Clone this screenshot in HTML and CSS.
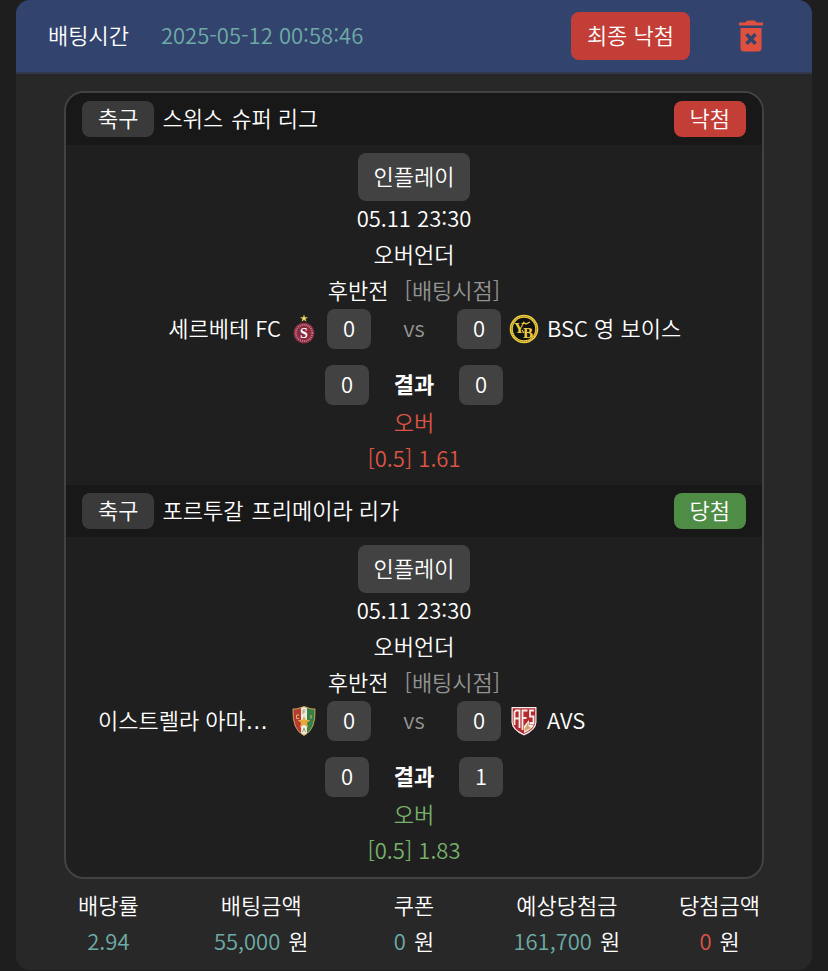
FILE: index.html
```html
<!DOCTYPE html>
<html lang="ko">

<head>
    <meta charset="UTF-8" />
    <meta name="viewport" content="width=device-width, initial-scale=1.0" />
    <title>배팅내역</title>
    <link rel="stylesheet" href="styles.css">
</head>

<body>
    <main class="bet">
        <header class="bet-header">
            <span class="text">배팅시간</span>
            <time class="text teal">2025-05-12 00:58:46</time>
            <button type="button" class="btn btn-lose final">최종 낙첨</button>
            <button type="button" class="btn-delete" aria-label="삭제">
                <svg width="26" height="32" viewBox="0 0 26 32">
                    <path fill="#e0503f" d="M1 2.5H7.5Q8.5 .5 10 .5H16Q17.500 .5 18.500 2.500H25V5.500H1Z" />
                    <path fill="#e0503f" fill-rule="evenodd" d="M2.500 8H23.500V28Q23.500 31.500 20 31.500H6Q2.500 31.500 2.500 28ZM7.200 15.500 10.700 19 7.200 22.500 9.800 25.100 13 21.700 16.200 25.100 18.800 22.500 15.300 19 18.800 15.500 16.200 12.900 13 16.300 9.800 12.900Z" />
                </svg>
            </button>
        </header>

        <div class="games">
            <section class="game">
                <div class="game-head">
                    <span class="badge text">축구</span>
                    <span class="text">스위스</span>
                    <span class="text">슈퍼 리그</span>
                    <span class="badge badge-lose text">낙첨</span>
                </div>
                <div class="game-body">
                    <button type="button" class="btn">인플레이</button>
                    <div class="text">05.11 23:30</div>
                    <div class="text">오버언더</div>
                    <div class="period text"><span>후반전</span><span class="gray">[배팅시점]</span></div>
                    <div class="match">
                        <div class="team home">
                            <span class="team-name text">세르베테 FC</span>
                            <svg class="logo" viewBox="0 0 30 30">
                                <path fill="#e5d35f" d="M15 .5 16 3.200H19L16.600 5 17.500 7.800 15 6.100 12.500 7.800 13.400 5 11 3.200H14Z" />
                                <circle cx="15" cy="19" r="10.500" fill="#8c2b40" />
                                <circle cx="15" cy="19" r="8.200" fill="none" stroke="#c38b98" stroke-width="1.800" stroke-dasharray="1 1" />
                                <circle cx="15" cy="19" r="6.200" fill="#8c2b40" />
                                <text x="15" y="23.500" class="logo-serif">S</text>
                            </svg>
                        </div>
                        <span class="score">0</span>
                        <span class="vs text gray">vs</span>
                        <span class="score">0</span>
                        <div class="team">
                            <svg class="logo" viewBox="0 0 30 30">
                                <circle cx="15" cy="15" r="14.300" fill="#f0cf3e" />
                                <circle cx="15" cy="15" r="12.600" fill="none" stroke="#7d6b20" stroke-width="1" stroke-dasharray="1.200 1" />
                                <circle cx="15" cy="15" r="11.200" fill="#111" />
                                <text x="10.500" y="18.500" class="logo-yb">Y</text>
                                <text x="19" y="24" class="logo-yb">B</text>
                                <path fill="none" stroke="#f0cf3e" stroke-width="1.200" d="M14 8 17 10 21 8M13 16 15 19" />
                            </svg>
                            <span class="team-name text">BSC 영 보이스</span>
                        </div>
                    </div>
                    <div class="result">
                        <span class="score">0</span>
                        <strong class="text">결과</strong>
                        <span class="score">0</span>
                    </div>
                    <div class="text red">오버</div>
                    <div class="text red">[0.5] 1.61</div>
                </div>
            </section>

            <section class="game">
                <div class="game-head">
                    <span class="badge text">축구</span>
                    <span class="text">포르투갈</span>
                    <span class="text">프리메이라 리가</span>
                    <span class="badge badge-win text">당첨</span>
                </div>
                <div class="game-body">
                    <button type="button" class="btn">인플레이</button>
                    <div class="text">05.11 23:30</div>
                    <div class="text">오버언더</div>
                    <div class="period text"><span>후반전</span><span class="gray">[배팅시점]</span></div>
                    <div class="match">
                        <div class="team home">
                            <span class="team-name long text">이스트렐라 아마<span class="dots">…</span></span>
                            <svg class="logo" viewBox="0 0 30 30">
                                <path fill="#b83a35" d="M4 3Q8 3.500 12 1.500L15 .5V29.500Q3 24 4 3Z" />
                                <path fill="#348047" d="M26 3Q22 3.500 18 1.500L15 .5V29.500Q27 24 26 3Z" />
                                <path fill="#ece9df" d="M12 1.500 15 .5 18 1.500V28L15 29.500 12 28Z" />
                                <path fill="none" stroke="#c8a452" d="M4 3Q8 3.500 12 1.500L15 .7 18 1.500Q22 3.500 26 3 27 24 15 29.300 3 24 4 3Z" />
                                <path fill="#e4a83c" d="M15 10 16.700 14H21.500L17.800 17 19.300 21.500 15 18.800 10.700 21.500 12.200 17 8.500 14H13.300Z" />
                                <path fill="none" stroke="#d9b45e" d="M10 9H7.500V12.500H10M22 9V12.500" />
                                <path fill="none" stroke="#a99b6b" d="M14 8V4H16.500M14 6H16M13.500 26 15 22 16.500 26" />
                            </svg>
                        </div>
                        <span class="score">0</span>
                        <span class="vs text gray">vs</span>
                        <span class="score">0</span>
                        <div class="team">
                            <svg class="logo" viewBox="0 0 30 30">
                                <path fill="#f5eeea" d="M2.500 1H27.500V16Q27.500 24 15 29.500 2.500 24 2.500 16Z" />
                                <path fill="#b52a30" d="M3.700 2.200H26.300V16Q26.300 23 15 28 3.700 23 3.700 16Z" />
                                <path fill="none" stroke="#f5eeea" stroke-width="1.800" d="M5.500 19V6L7 4.500H10.500V22M5.500 12.500H10.500M13.500 24V4.500H18.500M13.500 12H17.500M25 4.500H21V10.500H24.500V17H20.500" />
                                <path fill="#f5eeea" d="M15 27V20L20 14V18.500H25Q23.500 23 15 27Z" />
                                <path fill="#d9a066" d="M15.500 23 19.500 16V20L22 22 15.500 25Z" />
                            </svg>
                            <span class="team-name text">AVS</span>
                        </div>
                    </div>
                    <div class="result">
                        <span class="score">0</span>
                        <strong class="text">결과</strong>
                        <span class="score">1</span>
                    </div>
                    <div class="text green">오버</div>
                    <div class="text green">[0.5] 1.83</div>
                </div>
            </section>
        </div>

        <dl class="summary">
            <div>
                <dt class="text">배당률</dt>
                <dd class="text"><span class="teal">2.94</span></dd>
            </div>
            <div>
                <dt class="text">배팅금액</dt>
                <dd class="text"><span class="teal">55,000</span><span>원</span></dd>
            </div>
            <div>
                <dt class="text">쿠폰</dt>
                <dd class="text"><span class="teal">0</span><span>원</span></dd>
            </div>
            <div>
                <dt class="text">예상당첨금</dt>
                <dd class="text"><span class="teal">161,700</span><span>원</span></dd>
            </div>
            <div>
                <dt class="text">당첨금액</dt>
                <dd class="text"><span class="red">0</span><span>원</span></dd>
            </div>
        </dl>
    </main>
</body>

</html>
```
FILE: styles.css
```css
* {
    box-sizing: border-box;
}

body {
    margin: 0;
    padding: 0 16px;
    background: #1e1e1e;
    color: #fff;
    font-family: "Noto Sans CJK KR", sans-serif;
    font-size: 22px;
    font-weight: 350;
    line-height: 32px;
}

button {
    border: none;
    color: inherit;
    font: inherit;
    cursor: pointer;
}

/* the font sits low in its line */
.text {
    padding-bottom: 4px;
}

.bet {
    background: #282828;
    border-radius: 14px;
    overflow: hidden;
}

.bet-header {
    display: flex;
    align-items: center;
    gap: 32px;
    padding: 12px 32px;
    background: #32436d;
    border-bottom: 2px solid #323749;
}

.final {
    margin-left: auto;
}

.btn {
    height: 48px;
    padding: 0 16px 4px;
    border-radius: 8px;
    background: #424242;
}

.btn-lose,
.badge-lose {
    background: #c33e36;
}

.btn-delete {
    display: flex;
    justify-content: center;
    width: 58px;
    padding: 0;
    background: none;
}

.games {
    margin: 17px 48px 0;
    border: 2px solid #424242;
    border-radius: 20px;
    background: #1f1f1f;
    overflow: hidden;
}

.game-head {
    display: flex;
    align-items: center;
    gap: 8px;
    padding: 8px 16px;
    background: #181818;
}

.badge {
    padding: 0 16px 4px;
    border-radius: 8px;
    background: #3a3a3a;
}

.badge-lose,
.badge-win {
    margin-left: auto;
}

.badge-lose {
    background: #c33e36;
}

.badge-win {
    background: #4f8c45;
}

.game-body {
    padding: 8px 32px;
    text-align: center;
}

.game-body .btn {
    display: block;
    margin: 0 auto;
}

.period {
    display: flex;
    justify-content: center;
    gap: 16px;
}

.match,
.result {
    display: flex;
    align-items: center;
    justify-content: center;
}

.result {
    margin-top: 16px;
}

.result strong {
    width: 90px;
}

.team {
    display: flex;
    flex: 1;
    align-items: center;
    gap: 8px;
    min-width: 0;
    padding-left: 8px;
}

.home {
    justify-content: flex-end;
    padding: 0 8px 0 0;
}

.team-name {
    white-space: nowrap;
}

.long {
    flex: 1;
    text-align: left;
}

.dots {
    font-family: "DejaVu Sans", sans-serif;
    font-weight: 400;
    line-height: 1;
}

.logo {
    flex: none;
    width: 30px;
    height: 30px;
}

.logo-serif {
    fill: #fff;
    font: bold 14px "Liberation Serif", serif;
    text-anchor: middle;
}

.logo-yb {
    fill: #f0cf3e;
    font: bold 15px "Liberation Serif", serif;
    text-anchor: middle;
}

.score {
    flex: none;
    width: 44px;
    padding: 2px 0 6px;
    border-radius: 8px;
    background: #424242;
}

.vs {
    flex: none;
    width: 86px;
}

.summary {
    display: grid;
    grid-template-columns: repeat(5, 1fr);
    margin: 0;
    padding: 9px 16px 10px;
    text-align: center;
}

.summary dd {
    display: flex;
    justify-content: center;
    gap: 8px;
    margin: 0;
}

.teal {
    color: #6eaba6;
}

.gray {
    color: #949494;
}

.red {
    color: #db5443;
}

.green {
    color: #76b16b;
}
```
